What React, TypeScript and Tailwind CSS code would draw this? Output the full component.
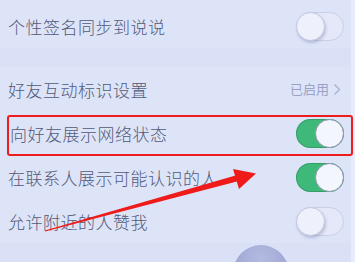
import React from 'react'

const font = { fontFamily: '"Noto Sans CJK SC", "Noto Sans", sans-serif' }

function Toggle({ on }: { on: boolean }) {
  if (on) {
    return (
      <div className="relative h-[29px] w-[48px] rounded-full bg-[#3fb97a] shadow-[inset_0_0_0_1px_rgba(40,120,80,0.4)]">
        <div className="absolute right-0 top-0 h-[29px] w-[29px] rounded-full border-[1.5px] border-[#8a93ad] bg-[#f4f6fd]" />
      </div>
    )
  }
  return (
    <div className="relative h-[29px] w-[48px] rounded-full border border-[#c9cfe8] bg-[#e4e8f9]">
      <div className="absolute -left-px -top-px h-[29px] w-[29px] rounded-full border border-[#c3c8e0] bg-[#eef1fc] shadow-[1px_2px_3px_rgba(110,115,160,0.35)]" />
    </div>
  )
}

function Row({ label, on, right, pl = 'pl-2' }: { label: string; on?: boolean; right?: string; pl?: string }) {
  return (
    <div className={`flex h-[44px] items-center justify-between ${pl} pr-[11px]`}>
      <span className="text-[17px] font-light leading-none tracking-[0.5px] text-[#535a78]">{label}</span>
      {right ? (
        <span className="flex items-center gap-1 pr-[3px] text-[13px] text-[#9ca2c6]">
          {right}
          <svg width="8" height="13" viewBox="0 0 8 13" fill="none">
            <path d="M1.5 1.5 L6.5 6.5 L1.5 11.5" stroke="#a8aed0" strokeWidth="1.3" />
          </svg>
        </span>
      ) : (
        <Toggle on={!!on} />
      )}
    </div>
  )
}

export default function App() {
  return (
    <div className="relative h-[262px] w-[355px] overflow-hidden bg-[#dde4f8]" style={font}>
      <div className="pt-[4px]">
        <Row label="个性签名同步到说说" on={false} />
        <div className="h-[19px] bg-[#dae1f6]" />
        <Row label="好友互动标识设置" right="已启用" />
        <Row label="向好友展示网络状态" on pl="pl-[10px]" />
        <Row label="在联系人展示可能认识的人" on />
        <Row label="允许附近的人赞我" on={false} />
      </div>
      <div className="h-[20px] bg-[#dae1f6]" />

      {/* grey ball at the bottom */}
      <div className="absolute left-[233px] top-[245px] h-[56px] w-[56px] rounded-full bg-[radial-gradient(circle_at_50%_25%,#b4bbe2,#8f97c6)]" />

      {/* right edge strip */}
      <div className="absolute right-0 top-0 h-full w-[4px] bg-[#e7ebfb]" />

      {/* red highlight box */}
      <div className="absolute left-[7px] top-[115px] h-[41px] w-[346px] rounded-[3px] border-[2.5px] border-[#ee1c1c]" />

      {/* red arrow */}
      <svg className="absolute left-0 top-0" width="355" height="262" viewBox="0 0 355 262">
        <polygon points="44.8,230.5 237.2,175 238.8,181 45.2,231.5" fill="#ef1b1b" />
        <polygon points="233,169 256,173.5 239,189" fill="#ef1b1b" />
      </svg>
    </div>
  )
}
